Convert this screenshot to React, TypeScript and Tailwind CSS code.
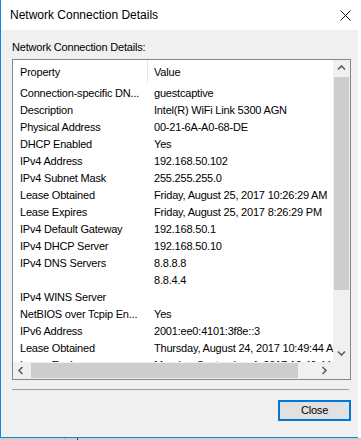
import React from 'react'

const rows: [string, string][] = [
  ['Connection-specific DN...', 'guestcaptive'],
  ['Description', 'Intel(R) WiFi Link 5300 AGN'],
  ['Physical Address', '00-21-6A-A0-68-DE'],
  ['DHCP Enabled', 'Yes'],
  ['IPv4 Address', '192.168.50.102'],
  ['IPv4 Subnet Mask', '255.255.255.0'],
  ['Lease Obtained', 'Friday, August 25, 2017 10:26:29 AM'],
  ['Lease Expires', 'Friday, August 25, 2017 8:26:29 PM'],
  ['IPv4 Default Gateway', '192.168.50.1'],
  ['IPv4 DHCP Server', '192.168.50.10'],
  ['IPv4 DNS Servers', '8.8.8.8'],
  ['', '8.8.4.4'],
  ['IPv4 WINS Server', ''],
  ['NetBIOS over Tcpip En...', 'Yes'],
  ['IPv6 Address', '2001:ee0:4101:3f8e::3'],
  ['Lease Obtained', 'Thursday, August 24, 2017 10:49:44 AM'],
  ['Lease Expires', 'Monday, September 4, 2017 10:49:44 AM'],
]

function Chevron({ dir }: { dir: 'up' | 'down' | 'left' | 'right' }) {
  const d = {
    up: 'M1 5.5 L4.5 2 L8 5.5',
    down: 'M1 2.5 L4.5 6 L8 2.5',
    left: 'M5.5 1 L2 4.5 L5.5 8',
    right: 'M2.5 1 L6 4.5 L2.5 8',
  }[dir]
  return (
    <svg width="9" height="9" viewBox="0 0 9 9" aria-hidden>
      <path d={d} fill="none" stroke="#606060" strokeWidth="1.6" />
    </svg>
  )
}

export default function App() {
  return (
    <div className="flex h-[440px] w-[361px] flex-col overflow-hidden bg-white font-['Liberation_Sans',Arial,sans-serif] text-black">
      <div className="flex h-[438px] w-[358px] flex-col border-b border-l border-[#1883d7]">
        {/* title bar */}
        <div className="flex h-[30px] items-center justify-between bg-white pl-[9px] pr-[7px]">
          <span className="text-[12px] leading-[30px]">Network Connection Details</span>
          <svg width="11" height="11" viewBox="0 0 11 11" aria-hidden>
            <path d="M0.5 0.5 L10.5 10.5 M10.5 0.5 L0.5 10.5" stroke="#111" strokeWidth="1" />
          </svg>
        </div>

        {/* body */}
        <div className="flex flex-1 flex-col bg-[#f0f0f0] pl-[11px] pt-[10px] text-[11px] tracking-[-0.2px]">
          <div className="leading-[14px]">Network Connection Details:</div>

          <div className="mt-[5px] flex h-[321px] w-[339px] flex-col border border-[#828790] bg-white">
            <div className="flex h-[302px]">
              {/* list content */}
              <div className="w-[320px] overflow-hidden">
                <div className="flex h-[25px] items-center">
                  <div className="w-[134px] pl-[7px]">Property</div>
                  <div className="h-[23px] w-px self-start bg-[#e5e5e5]" />
                  <div className="pl-[6px]">Value</div>
                </div>
                {rows.map(([k, v], i) => (
                  <div key={i} className="flex h-[17px] items-center whitespace-nowrap leading-[17px]">
                    <div className="w-[134px] shrink-0 pl-[7px]">{k}</div>
                    <div className="w-px shrink-0" />
                    <div className="pl-[6px]">{v}</div>
                  </div>
                ))}
              </div>
              {/* vertical scrollbar */}
              <div className="flex w-[17px] flex-col bg-[#f0f0f0]">
                <div className="flex h-[17px] items-center justify-center">
                  <Chevron dir="up" />
                </div>
                <div className="mx-px h-[213px] bg-[#cdcdcd]" />
                <div className="flex-1" />
                <div className="flex h-[17px] items-center justify-center">
                  <Chevron dir="down" />
                </div>
              </div>
            </div>
            {/* horizontal scrollbar */}
            <div className="flex h-[17px] bg-[#f0f0f0]">
              <div className="flex w-[17px] items-center justify-center">
                <Chevron dir="left" />
              </div>
              <div className="my-px ml-px w-[267px] bg-[#cdcdcd]" />
              <div className="flex-1" />
              <div className="flex w-[17px] items-center justify-center">
                <Chevron dir="right" />
              </div>
              <div className="w-[17px] bg-[#f0f0f0]" />
            </div>
          </div>

          <div className="mt-[9px] h-px w-[337px] bg-[#a0a0a0]" />

          <div className="mt-[10px] flex w-[339px] justify-end">
            <button className="flex h-[21px] w-[73px] items-center justify-center border-2 border-[#0078d7] bg-[#e1e1e1] text-[11px] leading-none">
              Close
            </button>
          </div>
        </div>
      </div>
      <div className="flex h-[2px] bg-[#cfcfcf]">
        <div className="w-[64px]" />
        <div className="w-px bg-[#a9c4dd]" />
        <div className="w-[12px]" />
        <div className="w-px bg-[#404040]" />
      </div>
    </div>
  )
}
